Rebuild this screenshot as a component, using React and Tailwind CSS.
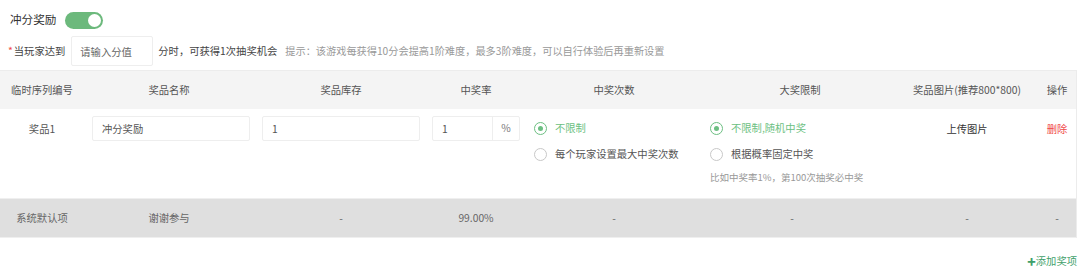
import { useState } from 'react';

const cols = 'grid grid-cols-[84px_170px_174px_96px_180px_192px_142px_38px]';

function Radio({ checked, label, onClick }) {
  return (
    <button type="button" onClick={onClick} className="flex items-center gap-[8px] h-[20px]">
      <span
        className={`w-[13px] h-[13px] rounded-full border flex items-center justify-center ${
          checked ? 'border-[#6cbf82]' : 'border-[#c8c8c8]'
        }`}
      >
        {checked && <span className="w-[5px] h-[5px] rounded-full bg-[#6cbf82]" />}
      </span>
      <span className={checked ? 'text-[#6cbf82]' : 'text-[#555]'}>{label}</span>
    </button>
  );
}

export default function App() {
  const [enabled, setEnabled] = useState(true);
  const [times, setTimes] = useState('none');
  const [limit, setLimit] = useState('random');

  return (
    <div className="w-[1080px] h-[274px] bg-white font-['Noto_Sans_CJK_SC',sans-serif] text-[10.3px] leading-none text-[#555] overflow-hidden">
      {/* Header switch */}
      <div className="flex items-center h-[20px] mt-[10px] pl-[10px] gap-[9px]">
        <span className="text-[11.6px] text-[#333]">冲分奖励</span>
        <button
          type="button"
          onClick={() => setEnabled(!enabled)}
          className={`w-[38px] h-[17px] rounded-full flex items-center px-[2px] ${
            enabled ? 'bg-[#6cb97c] justify-end' : 'bg-[#ccc] justify-start'
          }`}
        >
          <span className="w-[13px] h-[13px] rounded-full bg-white" />
        </button>
      </div>

      {/* Score rule */}
      <div className="flex items-center h-[30px] mt-[6px] pl-[8px]">
        <span className="text-[#f04848]">*</span>
        <span className="text-[#444] ml-[1px]">当玩家达到</span>
        <input
          placeholder="请输入分值"
          className="ml-[6px] w-[82px] h-[30px] border border-[#eee] rounded-[2px] px-[8px] text-[10.3px] placeholder:text-[#666] outline-none"
        />
        <span className="ml-[5px] text-[#444]">分时，可获得1次抽奖机会</span>
        <span className="ml-[8px] text-[10.2px] text-[#999]">
          提示：该游戏每获得10分会提高1阶难度，最多3阶难度，可以自行体验后再重新设置
        </span>
      </div>

      {/* Table */}
      <div className="mt-[4px] w-[1077px] border-t border-[#ececec] border-r">
        <div className={`${cols} h-[38px] items-center bg-[#f4f4f4] text-[#555] text-center`}>
          <span>临时序列编号</span>
          <span>奖品名称</span>
          <span>奖品库存</span>
          <span>中奖率</span>
          <span>中奖次数</span>
          <span>大奖限制</span>
          <span>奖品图片(推荐800*800)</span>
          <span>操作</span>
        </div>

        <div className={`${cols} h-[89px] bg-white items-start`}>
          <div className="h-[40px] flex items-center justify-center text-[#555]">奖品1</div>
          <div className="pt-[7px] pl-[8px] pr-[4px]">
            <input
              defaultValue="冲分奖励"
              className="w-full h-[25px] border border-[#eee] rounded-[2px] px-[9px] text-[10.3px] text-[#555] outline-none"
            />
          </div>
          <div className="pt-[7px] px-[8px]">
            <input
              defaultValue="1"
              className="w-full h-[25px] border border-[#eee] rounded-[2px] px-[9px] text-[10.3px] text-[#555] outline-none"
            />
          </div>
          <div className="pt-[7px] pl-[4px] pr-[4px]">
            <div className="flex h-[25px] border border-[#eee] rounded-[2px]">
              <input
                defaultValue="1"
                className="w-[59px] px-[9px] text-[10.3px] text-[#555] outline-none"
              />
              <span className="flex-1 border-l border-[#eee] flex items-center justify-center text-[#777]">%</span>
            </div>
          </div>
          <div className="pt-[9px] pl-[10px] flex flex-col gap-[6px]">
            <Radio checked={times === 'none'} label="不限制" onClick={() => setTimes('none')} />
            <Radio checked={times === 'max'} label="每个玩家设置最大中奖次数" onClick={() => setTimes('max')} />
          </div>
          <div className="pt-[9px] pl-[6px] flex flex-col gap-[6px]">
            <Radio checked={limit === 'random'} label="不限制,随机中奖" onClick={() => setLimit('random')} />
            <Radio checked={limit === 'fixed'} label="根据概率固定中奖" onClick={() => setLimit('fixed')} />
            <span className="text-[9.5px] text-[#999] mt-[3px]">比如中奖率1%，第100次抽奖必中奖</span>
          </div>
          <div className="h-[40px] flex items-center justify-center text-[#333]">上传图片</div>
          <div className="h-[40px] flex items-center justify-center text-[#f04848]">删除</div>
        </div>

        <div className={`${cols} h-[40px] items-center bg-[#dfdfdf] border-y border-[#efefef] text-center text-[#666]`}>
          <span>系统默认项</span>
          <span>谢谢参与</span>
          <span>-</span>
          <span>99.00%</span>
          <span>-</span>
          <span className="pr-[16px]">-</span>
          <span>-</span>
          <span>-</span>
        </div>
      </div>

      <div className="flex justify-end w-[1077px] mt-[16px]">
        <button type="button" className="flex items-center text-[#3f9f6a]">
          <span className="font-black text-[14px] leading-none">+</span>
          <span>添加奖项</span>
        </button>
      </div>
    </div>
  );
}
